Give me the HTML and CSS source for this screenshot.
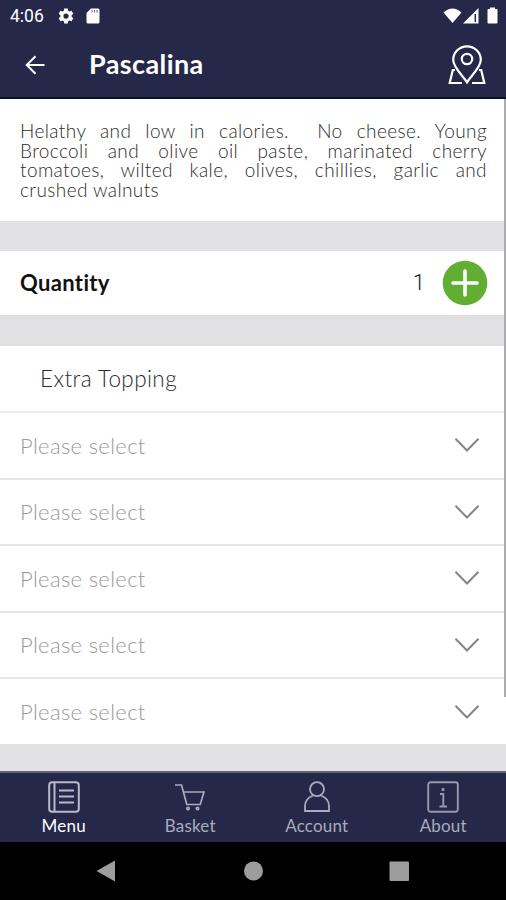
FILE: index.html
```html
<!DOCTYPE html>
<html lang="en">
<head>
<meta charset="utf-8">
<title>Pascalina</title>
<link rel="stylesheet" href="styles.css">
</head>
<body>
<div class="screen">
  <header class="header">
    <div class="status">
      <span class="clock">4:06</span>
      <svg class="gear" width="18" height="18" viewBox="0 0 24 24"><path fill="#fff" fill-rule="evenodd" d="M19.4 13c.1-.7.1-1.300 0-2l2.100-1.600c.2-.2.300-.4.100-.7l-2-3.400c-.1-.2-.4-.3-.6-.2l-2.500 1c-.5-.4-1.100-.7-1.700-1L14.500 2.400c0-.2-.2-.4-.5-.4h-4c-.3 0-.5.200-.5.400L9.200 5.100c-.6.300-1.200.600-1.700 1L5 5.100c-.2-.1-.5 0-.6.200l-2 3.400c-.1.300-.1.500.1.700L4.600 11c-.1.700-.1 1.300 0 2l-2.100 1.600c-.2.200-.2.400-.1.700l2 3.400c.1.200.4.300.6.200l2.500-1c.5.400 1.100.7 1.700 1l.3 2.700c0 .2.200.4.500.4h4c.3 0 .5-.2.500-.4l.3-2.700c.6-.3 1.200-.6 1.700-1l2.500 1c.2.100.5 0 .6-.2l2-3.400c.2-.3.100-.5-.1-.7zM12 15.500a3.500 3.500 0 1 1 0-7 3.500 3.500 0 0 1 0 7z"/></svg>
      <svg class="card" width="14" height="16" viewBox="0 0 14 16"><path fill="#fff" d="M5 .5h7a1.500 1.500 0 0 1 1.500 1.500v12a1.500 1.500 0 0 1-1.500 1.500H2A1.500 1.500 0 0 1 .5 14V5z"/><path stroke="#777891" stroke-width="1.200" d="M6 2v2.500M8.500 2v2.500M11 2v2.500"/></svg>
      <svg class="signals" width="56" height="18" viewBox="0 0 56 18"><path fill="#fff" d="M.5 5.500Q9.500-2.500 18.500 5.500L9.500 16z"/><path fill="#fff" d="M20 16.500 35.500 1v15.500z"/><path stroke="#252849" stroke-width="1.500" d="M32.300 7v8"/><path fill="#fff" d="M47 .5h5V2h1.500q1 0 1 1v12.500q0 1-1 1h-8q-1 0-1-1V3q0-1 1-1H47z"/></svg>
    </div>
    <div class="titlebar">
      <svg class="back" width="20" height="20" viewBox="0 0 20 20"><path fill="none" stroke="#fff" stroke-width="2" d="M19.500 10H2M10.500 1.200 1.700 10l8.800 8.800"/></svg>
      <h1>Pascalina</h1>
      <svg class="pin" width="38" height="40" viewBox="0 0 38 40"><g fill="none" stroke="#fff" stroke-width="2.200"><path d="M19 37.300C15 31 5.200 22.500 5.200 14.800a13.800 13.500 0 0 1 27.600 0C32.800 22.500 23 31 19 37.300z"/><circle cx="19" cy="14" r="5.200"/><path d="M7 25H4.800L1.700 38H14M31 25h2.200l3.100 13H24"/></g></svg>
    </div>
  </header>
  <main class="content">
    <p class="description"><span>Helathy and low in calories.&nbsp; No cheese. Young</span> <span>Broccoli and olive oil paste, marinated cherry</span> <span>tomatoes, wilted kale, olives, chillies, garlic and</span> <span class="last">crushed walnuts</span></p>
    <section class="quantity">
      <h2>Quantity</h2>
      <span class="count">1</span>
      <svg width="46" height="46" viewBox="0 0 46 46"><circle cx="23" cy="23" r="22.300" fill="#62ae33"/><path stroke="#fff" stroke-width="3.600" stroke-linecap="round" d="M23 11v24M11 23h24"/></svg>
    </section>
    <section class="options">
      <h3>Extra Topping</h3>
      <div class="select"><span>Please select</span><svg width="26" height="16" viewBox="0 0 26 16"><path d="M1.500 1.800 13 13.500 24.500 1.800"/></svg></div>
      <div class="select"><span>Please select</span><svg width="26" height="16" viewBox="0 0 26 16"><path d="M1.500 1.800 13 13.500 24.500 1.800"/></svg></div>
      <div class="select"><span>Please select</span><svg width="26" height="16" viewBox="0 0 26 16"><path d="M1.500 1.800 13 13.500 24.500 1.800"/></svg></div>
      <div class="select"><span>Please select</span><svg width="26" height="16" viewBox="0 0 26 16"><path d="M1.500 1.800 13 13.500 24.500 1.800"/></svg></div>
      <div class="select"><span>Please select</span><svg width="26" height="16" viewBox="0 0 26 16"><path d="M1.500 1.800 13 13.500 24.500 1.800"/></svg></div>
    </section>
    <div class="scrollbar"></div>
  </main>
  <nav class="tabs">
    <div class="tab active"><svg width="32" height="32" viewBox="0 0 32 32"><g fill="none" stroke="#b9bacb" stroke-width="2"><rect x="1.200" y="1.200" width="29.600" height="29.600" rx="3"/><path d="M6.500 1v30M11 9.500h15M11 15.500h15M11 21.500h15"/></g></svg><span>Menu</span></div>
    <div class="tab"><svg width="32" height="32" viewBox="0 0 32 32"><g fill="none" stroke="#aaabbd" stroke-width="1.700"><path d="M1 4h6.500l5.300 19.500h13.400L30 11H9.500"/><circle cx="14" cy="27.500" r="1.200"/><circle cx="23.500" cy="27.500" r="1.200"/></g></svg><span>Basket</span></div>
    <div class="tab"><svg width="32" height="32" viewBox="0 0 32 32"><g fill="none" stroke="#aaabbd" stroke-width="1.800"><circle cx="16" cy="8.200" r="7"/><path d="M12 14.500C7 16.500 4 20 4 25v5h24v-5c0-5-3-8.500-8-10.500"/></g></svg><span>Account</span></div>
    <div class="tab"><svg width="32" height="32" viewBox="0 0 32 32"><g fill="none" stroke="#9798ad" stroke-width="1.900"><rect x="1.200" y="1.200" width="29.600" height="29.600" rx="2.500"/><path d="M13 13h3.300v12M12.500 25.500h7.500"/><path stroke-width="2.800" d="M14.600 8.500h2.800"/></g></svg><span>About</span></div>
  </nav>
  <div class="sysnav">
    <svg width="506" height="58" viewBox="0 0 506 58"><g fill="#9d9d9d"><path d="M96.500 29 115 18.500v21z"/><circle cx="253.500" cy="29" r="9.500"/><rect x="389.500" y="19.500" width="19.500" height="19.500" rx="1"/></g></svg>
  </div>
</div>
</body>
</html>
```
FILE: styles.css
```css
* { box-sizing: border-box; margin: 0; padding: 0; }
body { font-family: Lato, "Liberation Sans", sans-serif; font-weight: 300; background: #fff; }
svg { display: block; flex: none; }
.screen { width: 506px; height: 900px; display: flex; flex-direction: column; overflow: hidden; }
.header { height: 99px; background: #252849; border-bottom: 2px solid #0d0f2c; color: #fff; }
.status { height: 32px; display: flex; align-items: center; padding: 0 7px 0 10px; }
.clock { width: 47px; font: 400 17.500px/20px Roboto, sans-serif; }
.card { margin-left: 11px; }
.signals { margin-left: auto; }
.titlebar { height: 65px; display: flex; align-items: center; padding: 0 20px 0 25px; }
.titlebar h1 { margin: 0 0 1px 44px; font-size: 27px; line-height: 32px; font-weight: 700; letter-spacing: 0.4px; }
.pin { margin-left: auto; }
.content { height: 672px; position: relative; background: #e1e1e3; }
.description { height: 122px; padding: 22px 19px 0 20px; background: #fff; color: #2c2c2c; font-size: 19px; line-height: 19.700px; letter-spacing: 0.4px; }
.description span { display: block; white-space: nowrap; text-align: justify; text-align-last: justify; word-spacing: -1px; }
.description .last { text-align-last: left; word-spacing: 0; }
.quantity { height: 64px; margin-top: 30px; padding: 0 18px 0 20px; display: flex; align-items: center; background: #fff; }
.quantity h2 { font-size: 22px; line-height: 26px; font-weight: 700; color: #111; letter-spacing: 0.35px; }
.count { margin: 0 17px 0 auto; font: 300 22px/26px Roboto, sans-serif; color: #222; }
.options { margin-top: 31px; background: #fff; }
.options h3 { height: 67px; padding-left: 40px; font-size: 22.500px; line-height: 66px; font-weight: 300; color: #2c2c2c; letter-spacing: 0.4px; border-bottom: 2px solid #ececec; }
.select { height: 66.500px; padding: 0 26px 0 20px; display: flex; justify-content: space-between; align-items: center; font-size: 22px; color: #999; letter-spacing: 0.33px; border-bottom: 2px solid #e6e6e7; }
.select:last-child { border-bottom: 0; height: 65px; }
.select path { fill: none; stroke: #858585; stroke-width: 2; }
.scrollbar { position: absolute; top: 0; right: 0; width: 2px; height: 598px; background: #ababad; }
.tabs { height: 71px; display: flex; background: #252849; border-top: 2px solid #64657b; }
.tab { flex: 1; padding: 8px 0 0 1px; display: flex; flex-direction: column; align-items: center; color: #aaabbd; font-size: 17px; line-height: 26px; font-weight: 400; letter-spacing: 0.2px; }
.tab.active { color: #fff; }
.sysnav { height: 58px; background: #000; }
```
